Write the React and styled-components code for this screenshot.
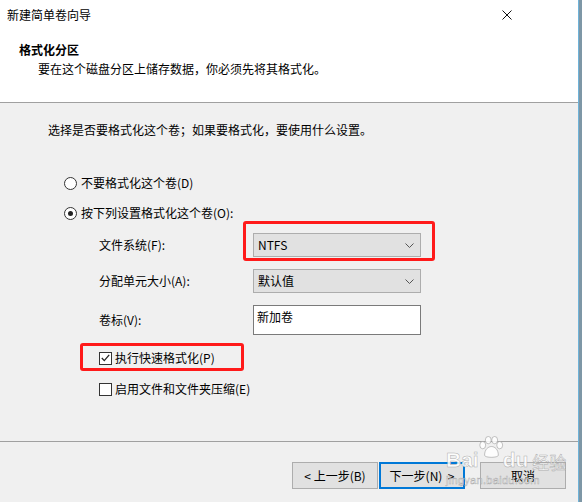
import React from "react";
import styled, { createGlobalStyle, css } from "styled-components";

const FONT = `"Noto Sans CJK SC", "Microsoft YaHei UI", "Liberation Sans", sans-serif`;

const GlobalStyle = createGlobalStyle`
  html, body {
    margin: 0;
    padding: 0;
    background: #7e97a6;
    height: 502px;
    overflow: hidden;
  }
  body {
    font-family: ${FONT};
    font-size: 12px;
    color: #000;
  }
`;

const Window = styled.div`
  position: relative;
  width: 578px;
  height: 502px;
  border-right: 1px solid #6fb3d9;
  background: #f0f0f0;
  display: flex;
  flex-direction: column;
  overflow: hidden;
`;

const TitleBar = styled.div`
  height: 30px;
  background: #fff;
  display: flex;
  align-items: center;
  justify-content: space-between;
  padding: 0 66px 0 7px;
  line-height: 16px;
`;

const Close = styled.svg`
  width: 10px;
  height: 10px;
  margin-top: -1px;
`;

const Header = styled.div`
  height: 73px;
  background: #fff;
  border-bottom: 1px solid #a0a0a0;
  padding: 12px 0 0 19px;
  box-sizing: border-box;
  line-height: 16px;
`;

const HeaderTitle = styled.div`
  font-weight: bold;
`;

const HeaderText = styled.div`
  margin: 3px 0 0 19px;
`;

const Body = styled.div`
  flex: 1;
  padding: 19px 0 0 48px;
  line-height: 16px;
  display: flex;
  flex-direction: column;
`;

const Options = styled.div`
  margin: 37px 0 0 16px;
  display: flex;
  flex-direction: column;
  gap: 14px;
`;

const Choice = styled.label`
  display: flex;
  align-items: center;
  gap: ${(p) => p.$gap || 4}px;
  height: 16px;
  white-space: nowrap;
`;

const RadioMark = styled.span`
  width: 11px;
  height: 11px;
  border: 1px solid #333;
  border-radius: 50%;
  background: #fff;
  display: flex;
  align-items: center;
  justify-content: center;
  &::after {
    content: "";
    width: 5px;
    height: 5px;
    border-radius: 50%;
    background: #222;
    display: ${(p) => (p.$on ? "block" : "none")};
  }
`;

const CheckMark = styled.span`
  width: 11px;
  height: 11px;
  border: 1px solid #333;
  background: #fff;
  display: flex;
  align-items: center;
  justify-content: center;
`;

const Form = styled.div`
  margin: 12px 0 0 51px;
  display: grid;
  grid-template-columns: 154px 168px;
  row-gap: 12px;
  align-items: center;
`;

const Field = styled.div`
  position: relative;
  width: 168px;
`;

const controlBase = css`
  box-sizing: border-box;
  width: 168px;
  border: 1px solid #adadad;
  font-family: ${FONT};
  font-size: 12px;
  line-height: 16px;
`;

const Select = styled.div`
  ${controlBase};
  height: 24px;
  background: #e1e1e1;
  display: flex;
  align-items: center;
  justify-content: space-between;
  padding: 0 6px 0 4px;
`;

const TextBox = styled.div`
  ${controlBase};
  height: 30px;
  background: #fff;
  border-color: #7a7a7a;
  padding: 3px 3px 0;
`;

const Label = styled.div`
  align-self: ${(p) => (p.$top ? "start" : "center")};
  margin-top: ${(p) => (p.$top ? 7 : 0)}px;
`;

const Checks = styled.div`
  margin: 15px 0 0 51px;
  display: flex;
  flex-direction: column;
  align-items: flex-start;
  gap: 15px;
`;

const Annotation = styled.div`
  position: absolute;
  top: ${(p) => p.$t}px;
  left: ${(p) => p.$l}px;
  right: ${(p) => p.$r}px;
  bottom: ${(p) => p.$b}px;
  border: 3px solid #ff1a1a;
  border-radius: 3px;
  pointer-events: none;
`;

const CheckWrap = styled.div`
  position: relative;
`;

const Footer = styled.div`
  height: 61px;
  border-top: 1px solid #a0a0a0;
  display: flex;
  justify-content: flex-end;
  align-items: flex-start;
  padding: 20px 12px 0 0;
  box-sizing: border-box;
`;

const Button = styled.div`
  box-sizing: border-box;
  width: 86px;
  height: 27px;
  background: #e1e1e1;
  border: ${(p) => (p.$default ? "2px solid #0078d7" : "1px solid #adadad")};
  margin-left: ${(p) => p.$gap || 0}px;
  display: flex;
  align-items: center;
  justify-content: center;
  line-height: 16px;
  white-space: pre;
`;

const Watermark = styled.div`
  position: absolute;
  left: 446px;
  top: 436px;
  width: 130px;
  white-space: nowrap;
  color: rgba(255, 255, 255, 0.85);
  -webkit-text-stroke: 0.5px rgba(140, 140, 140, 0.7);
  font-family: "Liberation Sans", sans-serif;
  pointer-events: none;
  line-height: 1;
`;

const Brand = styled.div`
  position: relative;
  display: flex;
  align-items: flex-end;
  height: 34px;
  font-size: 21px;
  font-weight: bold;
`;

const PawSpot = styled.span`
  position: absolute;
  left: 32px;
  top: 0;
`;

const Gap = styled.span`
  display: inline-block;
  flex: none;
  width: ${(p) => p.$w}px;
`;

const BrandCn = styled.span`
  font-family: ${FONT};
  font-size: 17px;
  font-weight: normal;
  margin-left: 4px;
`;

const Site = styled.div`
  font-size: 11px;
  margin-top: 5px;
  letter-spacing: 0.3px;
`;

const Chevron = () => (
  <svg width="9" height="5" viewBox="0 0 9 5">
    <path d="M0.5 0.5 L4.5 4.5 L8.5 0.5" fill="none" stroke="#555" strokeWidth="1" />
  </svg>
);

const Tick = () => (
  <svg width="9" height="8" viewBox="0 0 9 8">
    <path d="M0.8 4 L3.3 6.6 L8.2 0.8" fill="none" stroke="#222" strokeWidth="1.3" />
  </svg>
);

const Paw = () => (
  <svg width="26" height="22" viewBox="0 0 28 24">
    <g fill="rgba(255,255,255,0.85)" stroke="rgba(140,140,140,0.7)" strokeWidth="0.8">
      <ellipse cx="5" cy="10" rx="3.2" ry="4" />
      <ellipse cx="11" cy="4.5" rx="3.2" ry="4" />
      <ellipse cx="18" cy="4.5" rx="3.2" ry="4" />
      <ellipse cx="23.5" cy="10" rx="3.2" ry="4" />
      <path d="M7 21 C7 14.5 11 11.5 14.5 11.5 C18 11.5 22 14.5 22 21 C22 24 7 24 7 21 Z" />
    </g>
  </svg>
);

export default function App() {
  return (
    <>
      <GlobalStyle />
      <Window>
        <TitleBar>
          <span>新建简单卷向导</span>
          <Close viewBox="0 0 10 10">
            <path d="M0.5 0.5 L9.5 9.5 M9.5 0.5 L0.5 9.5" stroke="#111" strokeWidth="1" />
          </Close>
        </TitleBar>
        <Header>
          <HeaderTitle>格式化分区</HeaderTitle>
          <HeaderText>要在这个磁盘分区上储存数据，你必须先将其格式化。</HeaderText>
        </Header>
        <Body>
          <div>选择是否要格式化这个卷；如果要格式化，要使用什么设置。</div>
          <Options>
            <Choice>
              <RadioMark />
              不要格式化这个卷(D)
            </Choice>
            <Choice>
              <RadioMark $on />
              按下列设置格式化这个卷(O):
            </Choice>
          </Options>
          <Form>
            <Label>文件系统(F):</Label>
            <Field>
              <Select>
                <span>NTFS</span>
                <Chevron />
              </Select>
              <Annotation $t={-12} $l={-10} $r={-14} $b={-4} />
            </Field>
            <Label>分配单元大小(A):</Label>
            <Field>
              <Select>
                <span>默认值</span>
                <Chevron />
              </Select>
            </Field>
            <Label $top>卷标(V):</Label>
            <Field>
              <TextBox>新加卷</TextBox>
            </Field>
          </Form>
          <Checks>
            <CheckWrap>
              <Choice $gap={3}>
                <CheckMark>
                  <Tick />
                </CheckMark>
                执行快速格式化(P)
              </Choice>
              <Annotation $t={-7} $l={-19} $r={-29} $b={-5} />
            </CheckWrap>
            <Choice $gap={3}>
              <CheckMark />
              启用文件和文件夹压缩(E)
            </Choice>
          </Checks>
        </Body>
        <Footer>
          <Button>{"< 上一步(B)"}</Button>
          <Button $default $gap={1}>{"下一步(N)  >"}</Button>
          <Button $gap={15}>取消</Button>
        </Footer>
        <Watermark>
          <Brand>
            <span>Bai</span>
            <Gap $w={24} />
            <span>du</span>
            <PawSpot>
              <Paw />
            </PawSpot>
            <BrandCn>经验</BrandCn>
          </Brand>
          <Site>jingyan.baidu.com</Site>
        </Watermark>
      </Window>
    </>
  );
}
